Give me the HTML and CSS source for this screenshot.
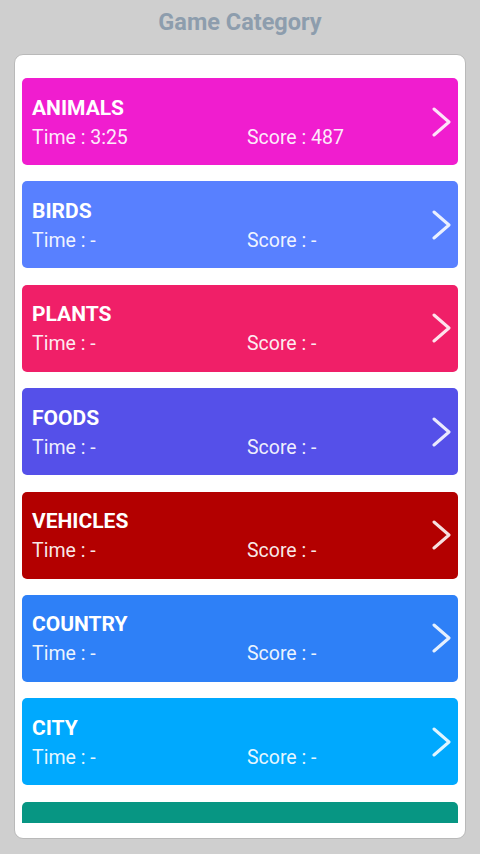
FILE: index.html
```html
<!DOCTYPE html>
<html lang="en">
<head>
    <meta charset="UTF-8">
    <meta name="viewport" content="width=device-width, initial-scale=1.0">
    <title>Game Category</title>
    <link rel="stylesheet" href="styles.css">
</head>
<body>
    <h1 class="header">Game Category</h1>

    <div class="panel">
        <div class="list">
            <div class="card animals">
                <div class="info">
                    <div class="name">ANIMALS</div>
                    <div class="stats">
                        <span>Time : 3:25</span>
                        <span>Score : 487</span>
                    </div>
                </div>
                <svg class="arrow" viewBox="0 0 20 30"><polyline points="2,2 17,15 2,28"/></svg>
            </div>

            <div class="card birds">
                <div class="info">
                    <div class="name">BIRDS</div>
                    <div class="stats">
                        <span>Time : -</span>
                        <span>Score : -</span>
                    </div>
                </div>
                <svg class="arrow" viewBox="0 0 20 30"><polyline points="2,2 17,15 2,28"/></svg>
            </div>

            <div class="card plants">
                <div class="info">
                    <div class="name">PLANTS</div>
                    <div class="stats">
                        <span>Time : -</span>
                        <span>Score : -</span>
                    </div>
                </div>
                <svg class="arrow" viewBox="0 0 20 30"><polyline points="2,2 17,15 2,28"/></svg>
            </div>

            <div class="card foods">
                <div class="info">
                    <div class="name">FOODS</div>
                    <div class="stats">
                        <span>Time : -</span>
                        <span>Score : -</span>
                    </div>
                </div>
                <svg class="arrow" viewBox="0 0 20 30"><polyline points="2,2 17,15 2,28"/></svg>
            </div>

            <div class="card vehicles">
                <div class="info">
                    <div class="name">VEHICLES</div>
                    <div class="stats">
                        <span>Time : -</span>
                        <span>Score : -</span>
                    </div>
                </div>
                <svg class="arrow" viewBox="0 0 20 30"><polyline points="2,2 17,15 2,28"/></svg>
            </div>

            <div class="card country">
                <div class="info">
                    <div class="name">COUNTRY</div>
                    <div class="stats">
                        <span>Time : -</span>
                        <span>Score : -</span>
                    </div>
                </div>
                <svg class="arrow" viewBox="0 0 20 30"><polyline points="2,2 17,15 2,28"/></svg>
            </div>

            <div class="card city">
                <div class="info">
                    <div class="name">CITY</div>
                    <div class="stats">
                        <span>Time : -</span>
                        <span>Score : -</span>
                    </div>
                </div>
                <svg class="arrow" viewBox="0 0 20 30"><polyline points="2,2 17,15 2,28"/></svg>
            </div>

            <div class="card misc">
                <div class="info">
                    <div class="name">MISCELLANEOUS</div>
                    <div class="stats">
                        <span>Time : -</span>
                        <span>Score : -</span>
                    </div>
                </div>
                <svg class="arrow" viewBox="0 0 20 30"><polyline points="2,2 17,15 2,28"/></svg>
            </div>
        </div>
    </div>
</body>
</html>
```

FILE: styles.css
```css
body {
    font-family: Roboto, "Liberation Sans", sans-serif;
    margin: 0;
    padding: 0;
    background: #cfcfcf;
    height: 854px;
    overflow: hidden;
}

.header {
    margin: 0;
    height: 44px;
    line-height: 45px;
    text-align: center;
    font-size: 23.5px;
    font-weight: bold;
    color: #8d9dad;
}

.panel {
    margin: 10px 14px 0;
    height: 785px;
    box-sizing: border-box;
    padding: 23px 7px 15px;
    background: #fff;
    border: 1px solid #b9b9b9;
    border-radius: 9px;
}

.list {
    height: 100%;
    overflow: hidden;
    display: flex;
    flex-direction: column;
    gap: 16.4px;
}

.card {
    flex: none;
    height: 87px;
    box-sizing: border-box;
    padding: 0 6px 0 10px;
    border-radius: 5px;
    display: flex;
    align-items: center;
    color: #fff;
}

.info {
    flex: 1;
    margin-top: 3px;
}

.name {
    font-size: 21px;
    font-weight: bold;
    line-height: 26px;
}

.stats {
    display: grid;
    grid-template-columns: 215px 1fr;
    margin-top: 3px;
    font-size: 19.5px;
    line-height: 28px;
    color: rgba(255, 255, 255, 0.92);
}

.arrow {
    width: 20px;
    height: 30px;
    fill: none;
    stroke: rgba(255, 255, 255, 0.88);
    stroke-width: 3;
    stroke-linecap: round;
    stroke-linejoin: round;
}

.animals { background: #f01dcf; }
.birds { background: #5880ff; }
.plants { background: #f01f68; }
.foods { background: #5550e9; }
.vehicles { background: #b30000; }
.country { background: #2e80f7; }
.city { background: #00a9fe; }
.misc { background: #079683; }
```
